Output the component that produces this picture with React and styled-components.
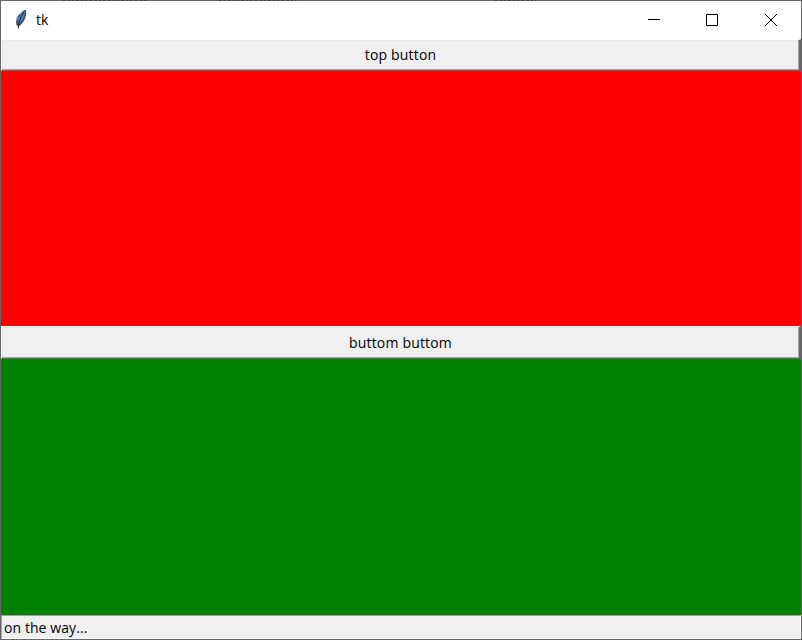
import React from "react";
import styled, { createGlobalStyle } from "styled-components";

const GlobalStyle = createGlobalStyle`
  * { box-sizing: border-box; }
  body { margin: 0; overflow: hidden; }
`;

const Window = styled.main`
  position: relative;
  width: 802px;
  height: 640px;
  display: flex;
  flex-direction: column;
  border: 1px solid #666;
  background: #f0f0f0;
  color: #000;
  font-family: "Open Sans", "Noto Sans", sans-serif;
  font-size: 14px;
`;

const EdgeMarks = styled.div`
  position: absolute;
  top: -1px;
  left: ${({ $left }) => $left}px;
  width: ${({ $width }) => $width}px;
  height: 1px;
  background: repeating-linear-gradient(90deg, #3d3d44 0 2px, #666 2px 4px, #514841 4px 7px, #626870 7px 9px);
`;

const TitleBar = styled.header`
  height: 38px;
  flex: none;
  display: flex;
  align-items: center;
  background: #fff;
`;

const Feather = styled.svg`
  width: 14px;
  height: 22px;
  margin-left: 13px;
`;

const Title = styled.span`
  flex: 1;
  margin-left: 8px;
  line-height: 20px;
`;

const WindowControl = styled.button`
  width: ${({ $last }) => ($last ? "59px" : "58px")};
  height: 38px;
  padding: 0;
  margin-right: ${({ $last }) => ($last ? "1px" : "0")};
  border: 0;
  background: transparent;
  display: flex;
  align-items: center;
  justify-content: center;

  svg { display: block; }
`;

const WideButton = styled.button`
  width: 100%;
  height: ${({ $height }) => $height}px;
  flex: none;
  padding: 0;
  border: solid;
  border-width: 1px 2px 1px 1px;
  border-color: #fff #696969 #696969 #fff;
  background: #f0f0f0;
  box-shadow: inset -1px -1px #a0a0a0, inset 1px 1px #e8e8e8;
  color: #000;
  font: inherit;
  line-height: 28px;
  letter-spacing: 0.18px;
`;

const Panel = styled.section`
  height: ${({ $height }) => $height}px;
  flex: none;
  background: ${({ $color }) => $color};
`;

const StatusBar = styled.footer`
  height: 24px;
  flex: none;
  padding-left: 2px;
  border: 1px solid;
  border-color: #a0a0a0 #fff #fff #a0a0a0;
  line-height: 23px;
  letter-spacing: 0.08px;
`;

function FeatherIcon() {
  return (
    <Feather viewBox="0 0 14 22" aria-hidden="true">
      <path d="M11.8 .8C7 2 3 7 2 12L2.5 16L4.5 17.5C9 15 13 8 12 1.5Z" fill="#3d4854" />
      <path d="M10.8 2C6.5 4 4 8 3.4 13L5 15.5C8.5 12 11.3 7 10.8 2Z" fill="#4584ca" />
      <path d="M10 3L7 8L4.8 14L4.2 19.5" fill="none" stroke="#14283c" strokeWidth="1" />
      <path d="M3.5 7L2.5 12M8.5 2.5L5.5 5.5" fill="none" stroke="#a9b2ba" strokeWidth="1" />
    </Feather>
  );
}

function ControlIcon({ path }) {
  return (
    <svg width="12" height="12" viewBox="0 0 12 12" aria-hidden="true">
      <path d={path} fill="none" stroke="#000" strokeWidth="1" />
    </svg>
  );
}

export default function App() {
  return (
    <>
      <GlobalStyle />
      <Window>
        <EdgeMarks $left={62} $width={83} />
        <EdgeMarks $left={218} $width={78} />
        <EdgeMarks $left={494} $width={41} />
        <TitleBar>
          <FeatherIcon />
          <Title>tk</Title>
          <WindowControl aria-label="Minimize">
            <ControlIcon path="M0 5.5H12" />
          </WindowControl>
          <WindowControl aria-label="Maximize">
            <ControlIcon path="M.5 .5H11.5V11.5H.5Z" />
          </WindowControl>
          <WindowControl aria-label="Close" $last>
            <ControlIcon path="M0 0L12 12M12 0L0 12" />
          </WindowControl>
        </TitleBar>
        <WideButton $height={32}>top button</WideButton>
        <Panel $color="#ff0000" $height={255} />
        <WideButton $height={33}>buttom buttom</WideButton>
        <Panel $color="#008000" $height={256} />
        <StatusBar>on the way...</StatusBar>
      </Window>
    </>
  );
}
